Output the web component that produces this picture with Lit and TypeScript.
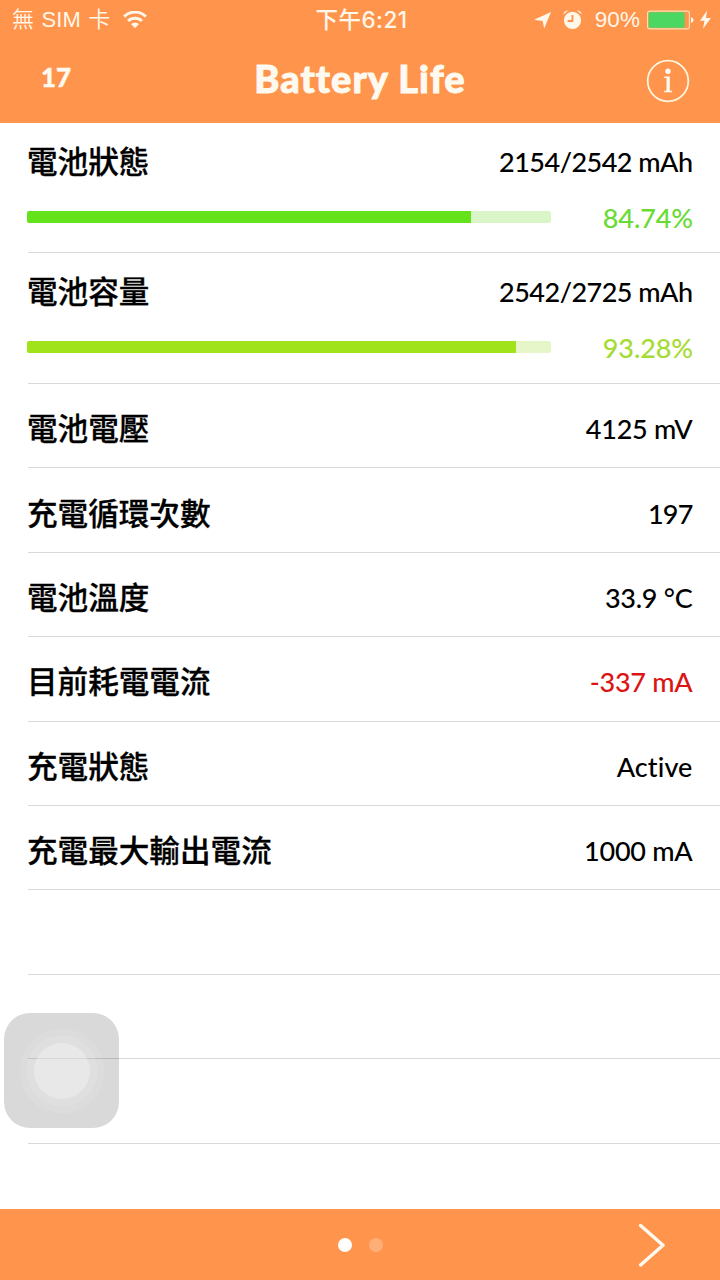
import { LitElement, html, css } from "lit";
import { customElement, property } from "lit/decorators.js";

interface Entry {
  label: string;
  value: string;
  kind?: string;
  percent?: number;
}

const ENTRIES: Entry[] = [
  { label: "電池狀態", value: "2154/2542 mAh", percent: 84.74, kind: "green" },
  { label: "電池容量", value: "2542/2725 mAh", percent: 93.28, kind: "lime" },
  { label: "電池電壓", value: "4125 mV" },
  { label: "充電循環次數", value: "197", kind: "number" },
  { label: "電池溫度", value: "33.9 °C" },
  { label: "目前耗電電流", value: "-337 mA", kind: "alert" },
  { label: "充電狀態", value: "Active", kind: "word" },
  { label: "充電最大輸出電流", value: "1000 mA" },
  { label: "", value: "" },
  { label: "", value: "" },
  { label: "", value: "" },
];

@customElement("status-bar")
class StatusBar extends LitElement {
  static styles = css`
    :host {
      display: grid;
      grid-template-columns: 1fr auto 1fr;
      height: 40px;
      align-items: center;
      padding: 0 9px 0 12px;
      box-sizing: border-box;
      color: #fff8ea;
      font-family: Inter, "Noto Sans CJK TC", sans-serif;
      font-size: 22.5px;
      line-height: 40px;
      white-space: nowrap;
    }
    .side { display: flex; align-items: center; height: 40px; }
    .carrier { font-family: "Liberation Sans", "Noto Sans CJK TC", sans-serif; font-weight: 350; font-size: 22px; word-spacing: 1.5px; }
    .end { justify-content: flex-end; }
    .time { font-weight: 500; letter-spacing: 0.5px; }
    .pct { font-family: "Liberation Sans", sans-serif; font-size: 22.5px; margin-left: 13px; letter-spacing: 0.1px; }
    .wifi { margin-left: 13px; }
    .alarm { margin-left: 12px; }
    .battery { margin-left: 7px; }
    .bolt { margin-left: 6px; }
    svg { display: block; fill: currentColor; }
  `;
  render() {
    return html`
      <div class="side">
        <span class="carrier">無 SIM 卡</span>
        <svg class="wifi" width="24" height="18" viewBox="0 0 24 18">
          <g fill="none" stroke="currentColor" stroke-width="3">
            <path d="M1.1 5.6a15.4 15.4 0 0 1 21.8 0" />
            <path d="M5.1 10a9.8 9.8 0 0 1 13.8 0" />
          </g>
          <path d="M12 17.2l-4-4.1a5.7 5.7 0 0 1 8 0z" />
        </svg>
      </div>
      <div class="time">下午6:21</div>
      <div class="side end">
        <svg width="17" height="17" viewBox="0 0 17 17"><path d="M17 0L10.2 16.6 8.6 8.9 0 7.8z" /></svg>
        <svg class="alarm" width="19" height="20" viewBox="0 0 19 20">
          <path d="M9.5 1.7a8.6 8.6 0 1 1 0 17.2a8.6 8.6 0 1 1 0-17.2zM8.5 5.1v5H4.6v1.9h5.8V5.1z" fill-rule="evenodd" />
          <path d="M.3 4.6A4.6 4.6 0 0 1 5.2.5zM18.7 4.6A4.6 4.6 0 0 0 13.8.5z" />
        </svg>
        <span class="pct">90%</span>
        <svg class="battery" width="47" height="20" viewBox="0 0 47 20">
          <rect x=".6" y="1.1" width="41.8" height="17.8" rx="2.2" fill="none" stroke="#ffe0b4" stroke-width="1.1" />
          <rect x="1.6" y="2.2" width="36" height="15.6" rx=".8" fill="#4cd763" />
          <path d="M44 7.2q2.6.3 2.6 2.9T44 13z" />
        </svg>
        <svg class="bolt" width="11" height="20" viewBox="0 0 11 20"><path d="M7 .6L0 10.8h4.5L3 18.8 11 7.9H6z" /></svg>
      </div>
    `;
  }
}

@customElement("info-row")
class InfoRow extends LitElement {
  @property({ attribute: false }) entry!: Entry;
  static styles = css`
    :host {
      display: block;
      box-sizing: border-box;
      margin-left: 28px;
      border-bottom: 1px solid #d9d9d9;
      color: #000;
    }
    .line {
      display: flex;
      justify-content: space-between;
      align-items: center;
      padding-right: 27.5px;
      height: 100%;
      box-sizing: border-box;
      white-space: nowrap;
    }
    .plain { padding-top: 7px; }
    .tall { height: 78px; }
    .label {
      font: 500 30.6px/44px "Noto Sans CJK TC", sans-serif;
      margin: 0 0 4px -1px;
      -webkit-text-stroke: 0.3px #000;
    }
    .value { font: 500 27px/40px Lato, sans-serif; letter-spacing: -0.25px; }
    .tall .value { letter-spacing: -0.52px; }
    .number .value { letter-spacing: -0.8px; }
    .word .value { letter-spacing: 0.1px; }
    .meter { display: flex; align-items: center; justify-content: space-between; padding-right: 27px; height: 32px; }
    .track { width: 524px; height: 12px; margin-left: -1px; border-radius: 2px; overflow: hidden; }
    .fill { height: 100%; }
    .green .track { background: #daf6c9; }
    .green .fill { background: #65e31a; }
    .lime .track { background: #e7f6c9; }
    .lime .fill { background: #a1e31a; }
    .green .rate { color: #6adb34; }
    .lime .rate { color: #a5dc34; }
    .alert .value { color: #dc1414; }
    .rate { font: 500 27px/32px Lato, sans-serif; padding-top: 2px; letter-spacing: -0.1px; }
  `;
  render() {
    const { label, value, percent, kind = "" } = this.entry;
    if (percent === undefined) {
      return html`<div class="line plain ${kind}"><span class="label">${label}</span><span class="value">${value}</span></div>`;
    }
    return html`
      <div class="line tall"><span class="label">${label}</span><span class="value">${value}</span></div>
      <div class="meter ${kind}">
        <div class="track"><div class="fill" style="width:${percent}%"></div></div>
        <span class="rate">${percent}%</span>
      </div>
    `;
  }
}

@customElement("app-root")
class AppRoot extends LitElement {
  static styles = css`
    :host {
      display: flex;
      flex-direction: column;
      position: relative;
      width: 720px;
      height: 1280px;
      overflow: hidden;
      background: #fff;
    }
    .head { height: 123px; background: #ff944d; color: #fffaf0; flex: none; }
    .nav {
      display: grid;
      grid-template-columns: 1fr auto 1fr;
      align-items: center;
      height: 80px;
      padding: 0 30px;
      font-family: Lato, sans-serif;
      font-weight: 900;
    }
    .count { font-size: 26px; line-height: 30px; margin: -6px 0 0 11px; -webkit-text-stroke: 0.4px #fffaf0; }
    .title { font-size: 38px; line-height: 48px; margin: 0 0 4px; font-weight: 900; letter-spacing: 1.05px; -webkit-text-stroke: 0.9px #fffaf0; }
    .info { justify-self: end; display: block; margin-top: 1px; }
    .list { flex: 1; display: flex; flex-direction: column; }
    .row { height: 84.4px; flex: none; }
    .first { height: 130px; }
    .second { height: 131px; }
    .foot {
      height: 71px;
      flex: none;
      display: grid;
      grid-template-columns: 1fr auto 1fr;
      align-items: center;
      background: #ff944d;
      padding: 0 54px;
    }
    .dots { grid-column: 2; display: flex; gap: 17px; }
    .dot { width: 14px; height: 14px; border-radius: 50%; background: #ffae78; }
    .on { background: #fff; }
    .next { justify-self: end; display: block; }
    .touch {
      position: absolute;
      left: 4px;
      top: 1013px;
      width: 115px;
      height: 115px;
      border-radius: 26px;
      background: rgba(0, 0, 0, 0.15);
      display: grid;
      place-items: center;
    }
  `;
  render() {
    return html`
      <div class="head">
        <status-bar></status-bar>
        <div class="nav">
          <span class="count">17</span>
          <h1 class="title">Battery Life</h1>
          <svg class="info" width="44" height="44" viewBox="0 0 44 44">
            <circle cx="22" cy="22" r="20.3" fill="none" stroke="#fff4dc" stroke-width="1.8" />
            <circle cx="22" cy="12.3" r="2.7" fill="#fffaf0" />
            <path d="M18.2 17.6h5.6v14.2h2.3v1.5h-8v-1.5h2.4V19.1h-2.3z" fill="#fffaf0" />
          </svg>
        </div>
      </div>
      <div class="list">
        ${ENTRIES.map((e, i) => html`<info-row class="row ${i === 0 ? "first" : i === 1 ? "second" : ""}" .entry=${e}></info-row>`)}
      </div>
      <div class="foot">
        <div class="dots"><div class="dot on"></div><div class="dot"></div></div>
        <svg class="next" width="28" height="44" viewBox="0 0 28 44">
          <path d="M2.6 2.5L25 22.3 2.6 42" fill="none" stroke="#fffaf0" stroke-width="3.4" stroke-linecap="round" stroke-linejoin="round" />
        </svg>
      </div>
      <div class="touch">
        <svg width="90" height="90" viewBox="0 0 90 90" fill="#fff">
          <circle cx="45" cy="45" r="42.5" fill-opacity=".08" />
          <circle cx="45" cy="45" r="35.5" fill-opacity=".11" />
          <circle cx="45" cy="45" r="28" fill-opacity=".3" />
        </svg>
      </div>
    `;
  }
}
